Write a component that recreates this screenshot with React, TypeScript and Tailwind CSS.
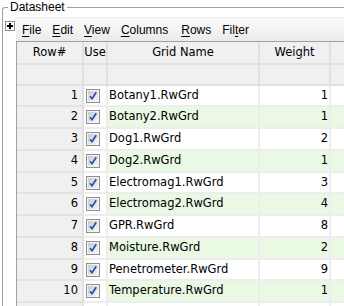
import React from "react";

const rows = [
  { n: 1, name: "Botany1.RwGrd", w: 1 },
  { n: 2, name: "Botany2.RwGrd", w: 1 },
  { n: 3, name: "Dog1.RwGrd", w: 2 },
  { n: 4, name: "Dog2.RwGrd", w: 1 },
  { n: 5, name: "Electromag1.RwGrd", w: 3 },
  { n: 6, name: "Electromag2.RwGrd", w: 4 },
  { n: 7, name: "GPR.RwGrd", w: 8 },
  { n: 8, name: "Moisture.RwGrd", w: 2 },
  { n: 9, name: "Penetrometer.RwGrd", w: 9 },
  { n: 10, name: "Temperature.RwGrd", w: 1 },
];

function CheckBox() {
  return (
    <svg width="14" height="14" viewBox="0 0 14 14">
      <defs>
        <linearGradient id="cbg" x1="0" y1="0" x2="1" y2="1">
          <stop offset="0" stopColor="#c9cacd" />
          <stop offset="1" stopColor="#f6f6f6" />
        </linearGradient>
      </defs>
      <rect x="0.5" y="0.5" width="13" height="13" fill="#f4f4f4" stroke="#8e8f8f" />
      <rect x="2" y="2" width="10" height="10" fill="url(#cbg)" />
      <path d="M4 7.2 L6 9.8 L10.2 3.2" stroke="#2f4fb0" strokeWidth="1.7" fill="none" strokeLinejoin="round" />
    </svg>
  );
}

function PlusBox() {
  return (
    <div className="ml-[2px] mt-[4px] w-[10px] h-[10px] border border-[#8c8c8c] bg-white flex items-center justify-center">
      <svg width="8" height="8" viewBox="0 0 8 8">
        <rect x="1" y="3" width="6" height="2" fill="#000" />
        <rect x="3" y="1" width="2" height="6" fill="#000" />
      </svg>
    </div>
  );
}

function MenuItem({ u, pre, post }: { u: string; pre?: string; post?: string }) {
  return (
    <span>
      {pre}
      <span className="underline underline-offset-[2px]">{u}</span>
      {post}
    </span>
  );
}

function MenuBar() {
  return (
    <div className="h-[24px] flex items-center gap-[11px] pl-[6px] text-[12px] font-['Liberation_Sans',Arial,sans-serif] bg-[linear-gradient(#f9f9f9,#f3f3f3_55%,#e9e9e9)] border-t border-[#e8e8e8]">
      <MenuItem u="F" post="ile" />
      <MenuItem u="E" post="dit" />
      <MenuItem u="V" post="iew" />
      <MenuItem u="C" post="olumns" />
      <span className="ml-[2px]">
        <MenuItem u="R" post="ows" />
      </span>
      <MenuItem pre="Fil" u="t" post="er" />
    </div>
  );
}

function HeaderRow({ h, labels }: { h: string; labels: string[] }) {
  return (
    <div className={`flex ${h}`}>
      <div className="w-[67px] shrink-0 bg-[#f0f0f0] border-r-2 border-b-2 border-[#e0e0e0] flex items-center justify-center">{labels[0]}</div>
      <div className="w-[24px] shrink-0 bg-[#f0f0f0] border-r-2 border-b-2 border-[#e0e0e0] flex items-center justify-center">{labels[1]}</div>
      <div className="w-[152px] shrink-0 bg-[#f0f0f0] border-r-2 border-b-2 border-[#e0e0e0] flex items-center justify-center">{labels[2]}</div>
      <div className="w-[71px] shrink-0 bg-[#f0f0f0] border-r-2 border-b-2 border-[#e0e0e0] flex items-center justify-center">{labels[3]}</div>
      <div className="flex-1 bg-[#f0f0f0] border-b-2 border-[#e0e0e0]" />
    </div>
  );
}

function Grid() {
  return (
    <div className="border-l border-t border-[#a0a0a0] text-[11.5px] font-['DejaVu_Sans',Verdana,sans-serif]">
      <HeaderRow h="h-[23px]" labels={["Row#", "Use", "Grid Name", "Weight"]} />
      <HeaderRow h="h-[21px]" labels={["", "", "", ""]} />
      {rows.map((r, i) => {
        const even = r.n % 2 === 0;
        const bg = even ? "bg-[#e9f9e4]" : "bg-white";
        const h = i % 4 === 0 ? "h-[21px]" : "h-[22px]";
        return (
          <div key={r.n} className={`flex ${h}`}>
            <div className="w-[67px] shrink-0 bg-[#f0f0f0] border-r-2 border-b-2 border-[#e2e2e2] flex items-center justify-end pr-[4px]">{r.n}</div>
            <div className="w-[24px] shrink-0 bg-white border-r-2 border-b-2 border-[#ededed] flex items-center pl-[2px]">
              <CheckBox />
            </div>
            <div className={`w-[152px] shrink-0 ${bg} border-r-2 border-b-2 border-[#ededed] flex items-center pl-[1px] whitespace-nowrap`}>{r.name}</div>
            <div className={`w-[71px] shrink-0 ${bg} border-r-2 border-b-2 border-[#ededed] flex items-center justify-end pr-[1px]`}>{r.w}</div>
            <div className={`flex-1 ${bg} border-b-2 border-[#ededed]`} />
          </div>
        );
      })}
      <div className="flex h-[22px]">
        <div className="w-[67px] shrink-0 bg-[#f0f0f0] border-r-2 border-[#e2e2e2]" />
        <div className="w-[24px] shrink-0 bg-white border-r-2 border-[#ededed]" />
        <div className="w-[152px] shrink-0 bg-white border-r-2 border-[#ededed]" />
        <div className="w-[71px] shrink-0 bg-white border-r-2 border-[#ededed]" />
        <div className="flex-1 bg-white" />
      </div>
    </div>
  );
}

export default function App() {
  return (
    <div className="w-[344px] h-[306px] overflow-hidden bg-white text-black">
      <fieldset className="ml-[2px] h-[340px] border-l border-t border-[#a0a0a0] rounded-tl-[3px]">
        <legend className="ml-[5px] px-[2px] text-[12px] leading-[15px] font-['Liberation_Sans',Arial,sans-serif]">Datasheet</legend>
        <div className="flex pt-[2px]">
          <div className="w-[13px] shrink-0">
            <PlusBox />
          </div>
          <div className="flex-1 min-w-0 flex flex-col">
            <MenuBar />
            <Grid />
          </div>
        </div>
      </fieldset>
    </div>
  );
}
